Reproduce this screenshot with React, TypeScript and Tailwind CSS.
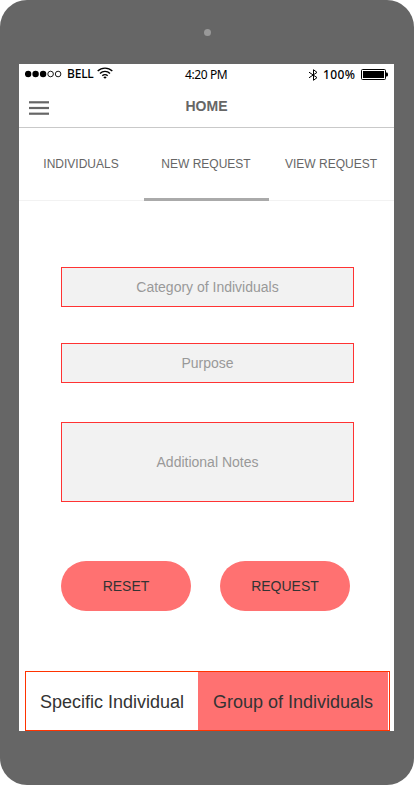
const sans = "font-['Liberation_Sans',Arial,sans-serif]";

function StatusBar() {
  return (
    <div className="flex h-[21px] items-center text-black font-['Noto_Sans',sans-serif] text-xs leading-[20px]">
      <svg className="-mt-[2px] ml-[6px] shrink-0" width="37" height="8" viewBox="0 0 37 8">
        <circle cx="3.1" cy="4" r="3.2" />
        <circle cx="10.6" cy="4" r="3.2" />
        <circle cx="18.1" cy="4" r="3.2" />
        <circle cx="25.6" cy="4" r="2.8" fill="none" stroke="#000" strokeWidth=".9" />
        <circle cx="33.1" cy="4" r="2.8" fill="none" stroke="#000" strokeWidth=".9" />
      </svg>
      <span className="-mt-px ml-[5px] w-[27px] whitespace-nowrap font-medium tracking-[-0.2px]">BELL</span>
      <svg className="-mt-[3px] ml-[3px] shrink-0" width="16" height="12" viewBox="0 0 16 12" fill="none" stroke="#000" strokeWidth="1.4">
        <path d="M.7 4.1C4.8.1 11.2.1 15.3 4.1M3 6.5c2.8-2.8 7.2-2.8 10 0M5.3 8.8c1.5-1.5 3.9-1.5 5.4 0" />
        <path d="M6.3 10.2c1-.9 2.4-.9 3.4 0L8 11.8z" fill="#000" stroke="none" />
      </svg>
      <span className="ml-[72px] w-[44px] whitespace-nowrap tracking-[-0.4px]">4:20 PM</span>
      <svg className="ml-[79px] shrink-0" width="11" height="12" viewBox="0 0 11 12" fill="none" stroke="#000" strokeWidth="1">
        <path d="M1 3.2l8 5.4L5.5 11.3V.7L9 3.4 1 8.8" />
      </svg>
      <span className="ml-[4px] w-[33px] whitespace-nowrap font-medium tracking-[0.4px]">100%</span>
      <svg className="ml-[5px] shrink-0" width="28" height="11" viewBox="0 0 28 11">
        <rect x=".5" y=".5" width="24" height="10" rx="1" fill="none" stroke="#000" />
        <rect x="2" y="2" width="21" height="7" />
        <path d="M25 3.5h1.2l.8 1v2l-.8 1H25z" />
      </svg>
    </div>
  );
}

function Header() {
  return (
    <header className="flex h-[43px] items-center border-b border-[#c9c9c9]">
      <svg className="ml-[10px] mt-[4px] shrink-0" width="20" height="14" viewBox="0 0 20 14" fill="#666">
        <rect width="20" height="2.2" y=".2" />
        <rect width="20" height="2.2" y="5.9" />
        <rect width="20" height="2.2" y="11.6" />
      </svg>
      <h1 className="mr-[30px] flex-1 text-center text-sm font-bold leading-4">HOME</h1>
    </header>
  );
}

function Tabs() {
  return (
    <nav className="grid h-[73px] grid-cols-3 border-b border-[#f2f2f2] text-center text-xs leading-[72px]">
      <div className="pr-px">INDIVIDUALS</div>
      <div className="h-[73px] border-b-[3px] border-[#aaa] pr-px">NEW REQUEST</div>
      <div className="pr-px">VIEW REQUEST</div>
    </nav>
  );
}

export default function App() {
  return (
    <div className={`flex h-[785px] w-[414px] flex-col rounded-[27px] bg-[#666] text-[#666] ${sans}`}>
      <div className="flex h-16 shrink-0 items-center justify-center">
        <div className="h-[7px] w-[7px] rounded-full bg-[#999]" />
      </div>
      <main className="ml-[19px] flex h-[667px] w-[375px] flex-col bg-white">
        <StatusBar />
        <Header />
        <Tabs />
        <form className="ml-[42px] mt-[66px] w-[293px] text-center text-sm text-[#999]">
          <div className="h-10 border border-[#f33] bg-[#f2f2f2] leading-[38px]">Category of Individuals</div>
          <div className="mt-9 h-10 border border-[#f33] bg-[#f2f2f2] leading-[38px]">Purpose</div>
          <div className="mt-[39px] h-20 border border-[#f33] bg-[#f2f2f2] leading-[78px]">Additional Notes</div>
          <div className="mt-[59px] flex gap-[29px] text-[#333]">
            <button type="button" className="h-[50px] w-[130px] rounded-[25px] bg-[#ff7171]">RESET</button>
            <button type="button" className="h-[50px] w-[130px] rounded-[25px] bg-[#ff7171]">REQUEST</button>
          </div>
        </form>
        <div className="ml-[6px] mt-[60px] flex h-[60px] w-[365px] border border-[#ff3300] text-center text-lg leading-[60px] text-[#333]">
          <div className="w-[172px]">Specific Individual</div>
          <div className="w-[190px] bg-[#ff7171]">Group of Individuals</div>
        </div>
      </main>
    </div>
  );
}
